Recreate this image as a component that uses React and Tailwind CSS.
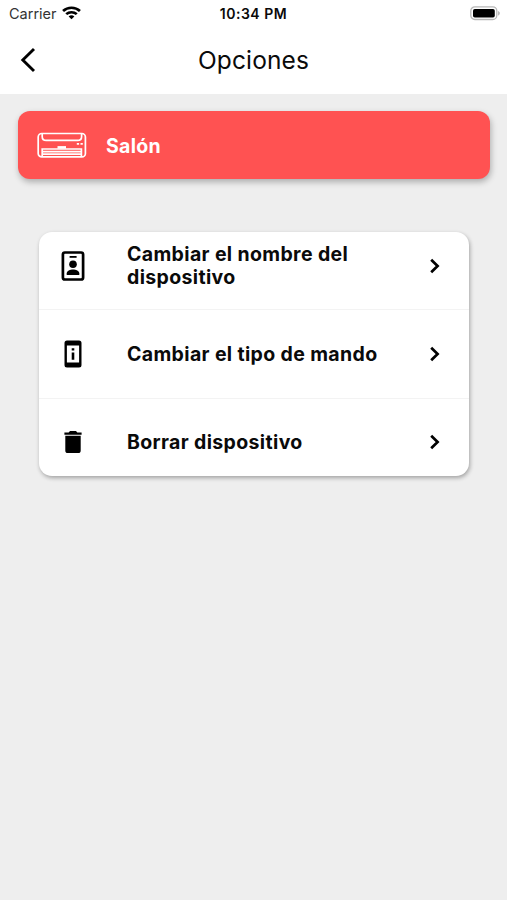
function WifiIcon() {
  return (
    <svg className="ml-[5px] h-[14px] w-[19px]" viewBox="0 0 18 14" preserveAspectRatio="none" fill="none" stroke="#000" strokeWidth="2.5">
      <path d="M1 5C5.4 .6 12.6 .6 17 5" />
      <path d="M4 8.2c2.8-2.7 7.2-2.7 10 0" />
      <path d="M6.3 10.4c1.5-1.5 3.9-1.5 5.4 0L9 13.3z" fill="#000" stroke="none" />
    </svg>
  );
}

function BatteryIcon() {
  return (
    <svg className="h-[15px] w-[30px]" viewBox="0 0 30 15">
      <rect x=".8" y=".9" width="26" height="12.6" rx="4" fill="#fff" stroke="#b8b8b8" strokeWidth="1.3" />
      <rect x="3" y="3" width="21.8" height="8.6" rx="1.8" fill="#000" />
      <path d="M28.2 5v4.6c2-.8 2-3.8 0-4.6z" fill="#aaa" />
    </svg>
  );
}

function AirConditionerIcon() {
  return (
    <svg className="h-[26px] w-[50px]" viewBox="0 0 50 26" fill="none" stroke="#fff" strokeWidth="1.7">
      <rect x="1.2" y="1.5" width="47.2" height="23.4" rx="3.5" />
      <path d="M5.2 1.7v2.700c0 2.500 1.400 4 4 4h31.400c2.600 0 4-1.500 4-4V1.700" />
      <path d="M5.2 24.600v-7.600h39.200v7.600" />
      <path d="M5.2 19.600h39.200M5.2 22.200h39.200" strokeWidth="1.7" />
      <path d="M20.500 15.400h8.500" strokeWidth="2.600" />
      <path d="M39.800 11.800h2.300M43.500 11.800h2.300" />
    </svg>
  );
}

function BadgeIcon() {
  return (
    <svg className="h-[30px] w-[24px]" viewBox="0 0 24 30">
      <rect x="1.9" y="1.5" width="20.2" height="27" rx="2" fill="none" stroke="#000" strokeWidth="2.7" />
      <path d="M8.6 5.9h7" stroke="#000" strokeWidth="1.8" />
      <circle cx="12" cy="13.2" r="3.8" fill="#000" />
      <path d="M5.7 24v-1.7c0-2.5 3.5-3.9 6.3-3.9s6.3 1.4 6.3 3.9V24z" fill="#000" />
    </svg>
  );
}

function PhoneInfoIcon() {
  return (
    <svg className="h-[28px] w-[18px]" viewBox="0 0 18 28">
      <path fillRule="evenodd" d="M3 .5h12a2.5 2.5 0 0 1 2.5 2.5v22a2.5 2.5 0 0 1-2.5 2.5H3A2.5 2.5 0 0 1 .5 25V3A2.5 2.5 0 0 1 3 .5zM2.9 5.4v17.2h12.2V5.4z" />
      <path d="M7.7 8.2h2.6v2.4H7.7zM7.7 12.4h2.6v7.4H7.7z" />
    </svg>
  );
}

function TrashIcon() {
  return (
    <svg className="h-[24px] w-[18px]" viewBox="0 0 18 24">
      <path d="M.4 2.4h4.3L6 1h6l1.3 1.4h4.3v2.4H.4zM1.3 5.8h15.4v14.6a2.6 2.6 0 0 1-2.6 2.6H3.9a2.6 2.6 0 0 1-2.6-2.6z" />
    </svg>
  );
}

function ChevronRight() {
  return (
    <svg className="ml-auto mr-[28px] h-[16px] w-[12px] shrink-0" viewBox="0 0 12 16" fill="none" stroke="#000" strokeWidth="2.7">
      <path d="M2.2 1.7 8.6 8l-6.4 6.3" />
    </svg>
  );
}

function OptionRow({ icon, children, className }) {
  return (
    <button className={`flex w-full items-center text-left ${className}`}>
      <span className="ml-[22px] flex w-[24px] shrink-0 justify-center">{icon}</span>
      <span className="ml-[42px] whitespace-nowrap text-[19.5px] font-bold leading-[23px] tracking-[0.36px]">{children}</span>
      <ChevronRight />
    </button>
  );
}

export default function App() {
  return (
    <div className="flex h-[900px] w-[507px] flex-col overflow-hidden bg-[#eeeeee] font-['Inter','Liberation_Sans',sans-serif] text-[#0a0a0a]">
      <header className="h-[94px] shrink-0 bg-white">
        <div className="grid h-[26px] grid-cols-3 items-center">
          <div className="flex items-center pl-[9px]">
            <span className="pt-px text-[14.5px] leading-[18px] text-[#333]">Carrier</span>
            <WifiIcon />
          </div>
          <span className="pt-[2px] text-center text-[14px] font-semibold leading-[18px] tracking-[0.5px]">10:34 PM</span>
          <div className="flex justify-end pr-[7px]"><BatteryIcon /></div>
        </div>
        <div className="grid h-[68px] grid-cols-[60px_1fr_60px] items-center">
          <button aria-label="Volver" className="ml-[20px]">
            <svg className="h-[26px] w-[18px]" viewBox="0 0 18 26" fill="none" stroke="#000" strokeWidth="2.9">
              <path d="M14 2 2.8 13 14 24" />
            </svg>
          </button>
          <h1 className="text-center text-[24.5px] leading-[30px] tracking-[0.15px]">Opciones</h1>
        </div>
      </header>
      <main>
        <section className="ml-[18px] mt-[17px] flex h-[68px] w-[472px] items-center rounded-[12px] bg-[#ff5252] pl-[19px] shadow-[1px_3px_6px_rgba(0,0,0,0.28)]">
          <AirConditionerIcon />
          <span className="ml-[19px] pt-px text-[19.5px] font-bold leading-[24px] tracking-[0.3px] text-white">Salón</span>
        </section>
        <section className="ml-[39px] mt-[53px] h-[244px] w-[430px] overflow-hidden rounded-[13px] bg-white shadow-[1px_2px_4px_rgba(0,0,0,0.32)]">
          <OptionRow className="h-[78px] border-b border-[#f3f3f3] pb-[9px]" icon={<BadgeIcon />}>
            Cambiar el nombre del<br />dispositivo
          </OptionRow>
          <OptionRow className="h-[89px] border-b border-[#f3f3f3]" icon={<PhoneInfoIcon />}>Cambiar el tipo de mando</OptionRow>
          <OptionRow className="h-[77px] pt-[9px]" icon={<TrashIcon />}>Borrar dispositivo</OptionRow>
        </section>
      </main>
    </div>
  );
}
